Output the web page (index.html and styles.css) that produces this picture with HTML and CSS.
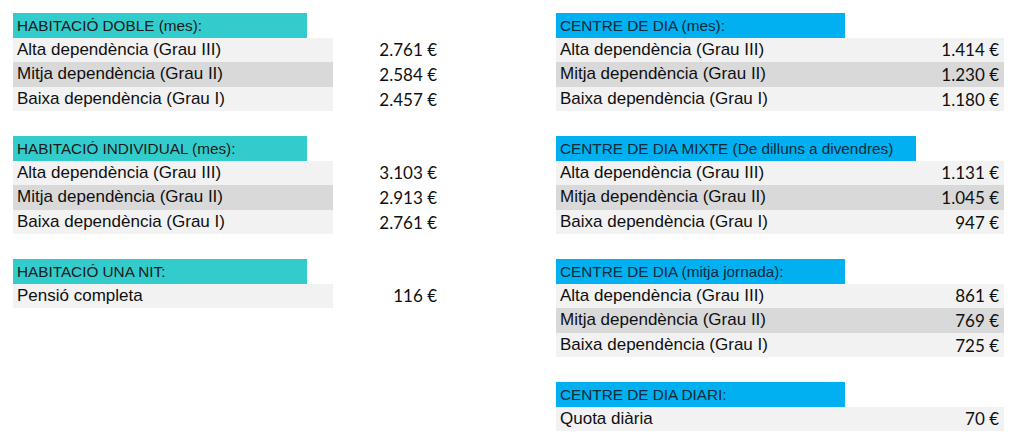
FILE: index.html
```html
<!DOCTYPE html>
<html lang="ca">
<head>
<meta charset="utf-8">
<title>Tarifes</title>
<link rel="stylesheet" href="styles.css">
</head>
<body>
<div class="page">
  <div class="col col-left">
    <section class="block">
      <div class="head teal">HABITACIÓ DOBLE (mes):</div>
      <div class="row light"><span class="label">Alta dependència (Grau III)</span><span class="price">2.761 €</span></div>
      <div class="row dark"><span class="label">Mitja dependència (Grau II)</span><span class="price">2.584 €</span></div>
      <div class="row light"><span class="label">Baixa dependència (Grau I)</span><span class="price">2.457 €</span></div>
    </section>
    <section class="block">
      <div class="head teal">HABITACIÓ INDIVIDUAL (mes):</div>
      <div class="row light"><span class="label">Alta dependència (Grau III)</span><span class="price">3.103 €</span></div>
      <div class="row dark"><span class="label">Mitja dependència (Grau II)</span><span class="price">2.913 €</span></div>
      <div class="row light"><span class="label">Baixa dependència (Grau I)</span><span class="price">2.761 €</span></div>
    </section>
    <section class="block">
      <div class="head teal">HABITACIÓ UNA NIT:</div>
      <div class="row light"><span class="label">Pensió completa</span><span class="price">116 €</span></div>
    </section>
  </div>
  <div class="col col-right">
    <section class="block">
      <div class="head blue">CENTRE DE DIA (mes):</div>
      <div class="row light"><span class="label">Alta dependència (Grau III)</span><span class="price">1.414 €</span></div>
      <div class="row dark"><span class="label">Mitja dependència (Grau II)</span><span class="price">1.230 €</span></div>
      <div class="row light"><span class="label">Baixa dependència (Grau I)</span><span class="price">1.180 €</span></div>
    </section>
    <section class="block">
      <div class="head blue wide">CENTRE DE DIA MIXTE (De dilluns a divendres)</div>
      <div class="row light"><span class="label">Alta dependència (Grau III)</span><span class="price">1.131 €</span></div>
      <div class="row dark"><span class="label">Mitja dependència (Grau II)</span><span class="price">1.045 €</span></div>
      <div class="row light"><span class="label">Baixa dependència (Grau I)</span><span class="price">947 €</span></div>
    </section>
    <section class="block">
      <div class="head blue">CENTRE DE DIA (mitja jornada):</div>
      <div class="row light"><span class="label">Alta dependència (Grau III)</span><span class="price">861 €</span></div>
      <div class="row dark"><span class="label">Mitja dependència (Grau II)</span><span class="price">769 €</span></div>
      <div class="row light"><span class="label">Baixa dependència (Grau I)</span><span class="price">725 €</span></div>
    </section>
    <section class="block">
      <div class="head blue">CENTRE DE DIA DIARI:</div>
      <div class="row light"><span class="label">Quota diària</span><span class="price">70 €</span></div>
    </section>
  </div>
</div>
</body>
</html>
```

FILE: styles.css
```css
html, body {
  margin: 0;
  padding: 0;
  background: #ffffff;
}

body {
  font-family: "Liberation Sans", Arial, sans-serif;
  color: #0f0f0f;
}

.page {
  display: flex;
  padding: 13px 0 0 13px;
}

.col {
  display: flex;
  flex-direction: column;
  gap: 24.6px;
}

.col-left {
  width: 424px;
}

.col-right {
  margin-left: 119px;
  width: 448px;
}

.block {
  display: flex;
  flex-direction: column;
}

.head {
  height: 24.6px;
  line-height: 26px;
  padding-left: 4px;
  font-size: 15.3px;
  color: #1a1a1a;
  box-sizing: border-box;
  white-space: nowrap;
  overflow: hidden;
}

.head.teal {
  background: #33cccc;
  width: 294px;
}

.head.blue {
  background: #00b0f0;
  width: 289px;
  color: #0d2a3a;
}

.head.blue.wide {
  width: 360px;
}

.row {
  height: 24.6px;
  display: flex;
  align-items: center;
  justify-content: space-between;
  box-sizing: border-box;
  white-space: nowrap;
}

.label {
  font-size: 17px;
  padding-left: 4px;
}

.price {
  font-family: Lato, "Liberation Sans", sans-serif;
  font-size: 17px;
  color: #0f0f0f;
}

.col-left .row .label {
  width: 316px;
  height: 100%;
  display: flex;
  align-items: center;
  flex: none;
}

.col-left .row.light .label {
  background: #f2f2f2;
}

.col-left .row.dark .label {
  background: #d9d9d9;
}

.col-right .row {
  width: 448px;
  padding-right: 5px;
}

.col-right .row.light {
  background: #f2f2f2;
}

.col-right .row.dark {
  background: #d9d9d9;
}
```
